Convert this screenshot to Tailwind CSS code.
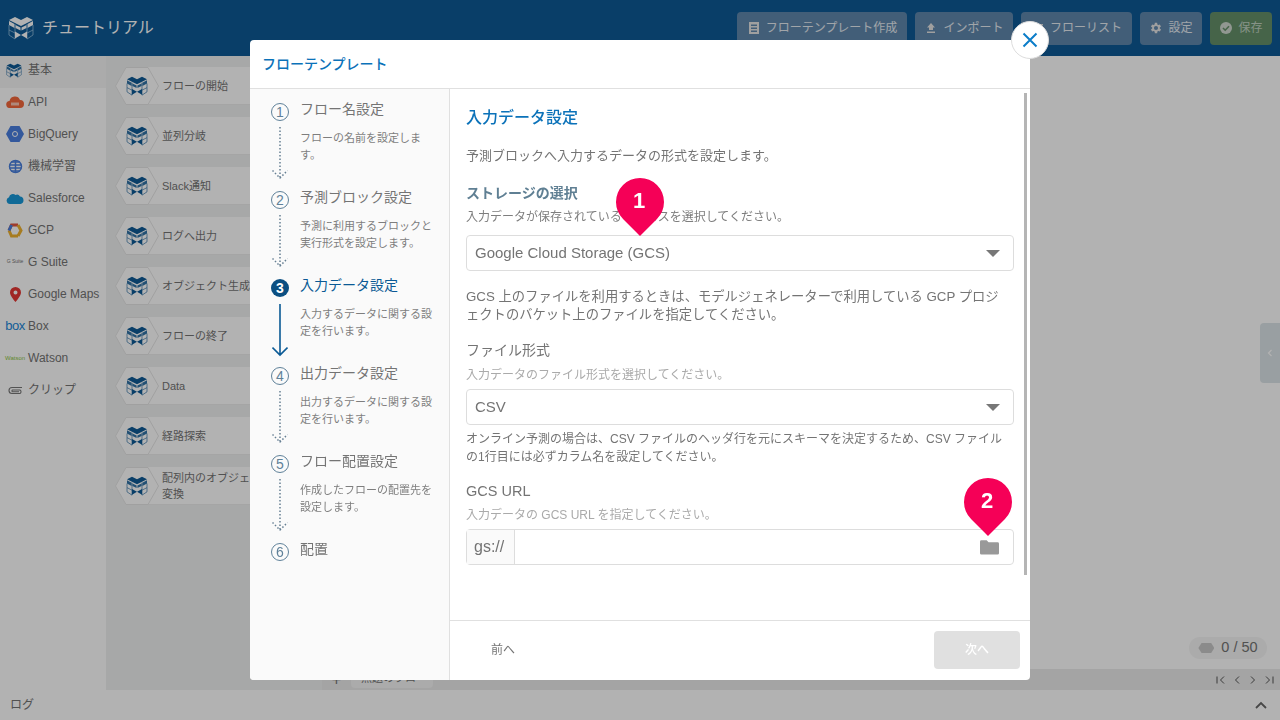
<!DOCTYPE html>
<html lang="ja">
<head>
    <meta charset="UTF-8">
    <title>チュートリアル</title>
    <script src="https://cdn.jsdelivr.net/npm/@tailwindcss/browser@4"></script>
</head>
<body class="w-[1280px] h-[720px] overflow-hidden bg-white text-[#747474] font-['Liberation_Sans','Noto_Sans_CJK_JP',sans-serif]">

    <svg class="hidden">
        <symbol id="cube" viewBox="0 0 26 24">
            <path d="M1 4l6-3 6 3 6-3 6 3-6 3-6 3-6-3z" fill="#0d5a96"/>
            <path d="M1 5l5.500 3v4L1 9zM25 5l-5.500 3v4L25 9zM7.500 9l5 2.500v3L7.500 12zM18.500 9l-5 2.500v3l5-2.500z" fill="#0d5a96" opacity=".85"/>
            <path d="M1 9v10l6 4M25 9v10l-6 4M7 8v15M19 8v15M1 14l6 3M25 14l-6 3" fill="none" stroke="#0d5a96" stroke-width=".7"/>
            <path d="M7 15.500l6 3.500 6-3.500v7l-6-3.500-6 3.500z" fill="#0d5a96"/>
        </symbol>
        <symbol id="hex" viewBox="0 0 44 38">
            <path d="M11 .5h22L43.500 19 33 37.500H11L.5 19z" fill="#fff" stroke="#e6e6e6"/>
        </symbol>
    </svg>

    <!-- Page behind the dialog -->
    <div class="flex flex-col h-[720px]">
        <header class="h-14 shrink-0 bg-[#0d5a96] flex items-center pl-2 pr-2">
            <svg class="w-[26px] h-6" viewBox="0 0 26 24">
                <path d="M1 4l6-3 6 3 6-3 6 3-6 3-6 3-6-3z" fill="#fff"/>
                <path d="M1 5l5.500 3v4L1 9zM25 5l-5.500 3v4L25 9zM7.500 9l5 2.500v3L7.500 12zM18.500 9l-5 2.500v3l5-2.500z" fill="#fff"/>
                <path d="M1 9v10l6 4M25 9v10l-6 4M7 8v15M19 8v15M1 14l6 3M25 14l-6 3" fill="none" stroke="#a9cbe6" stroke-width=".7"/>
                <path d="M7 15.500l6 3.500 6-3.500v7l-6-3.500-6 3.500z" fill="#fff"/>
            </svg>
            <span class="ml-2 text-[16px] text-white">チュートリアル</span>
            <div class="ml-auto flex gap-2 text-[12px] text-white/85">
                <button class="h-[33px] w-[170px] rounded bg-[#5f87ad] flex items-center justify-center gap-[5px]">
                    <svg class="w-[14px] h-[14px]" viewBox="0 0 14 14" fill="#e4e4e4"><path d="M2 1h10v12H2zM4 3.500v1.500h6V3.500zM4 6.500V8h6V6.500zM4 9.500V11h6V9.500z" fill-rule="evenodd"/></svg>
                    フローテンプレート作成
                </button>
                <button class="h-[33px] w-[98px] rounded bg-[#5f87ad] flex items-center justify-center gap-[5px]">
                    <svg class="w-[14px] h-[14px]" viewBox="0 0 14 14" fill="#e4e4e4"><path d="M7 2l4 4.500H9V9H5V6.500H3zM3 10.500h8V12H3z"/></svg>
                    インポート
                </button>
                <button class="h-[33px] w-[111px] rounded bg-[#5f87ad] flex items-center justify-center gap-[5px]">
                    <svg class="w-[14px] h-[14px]" viewBox="0 0 14 14" fill="#e4e4e4"><path d="M2 3h10v1.500H2zM2 6.500h10V8H2zM2 10h10v1.500H2z"/></svg>
                    フローリスト
                </button>
                <button class="h-[33px] w-[62px] rounded bg-[#5f87ad] flex items-center justify-center gap-[5px]">
                    <svg class="w-[14px] h-[14px]" viewBox="0 0 24 24" fill="#e4e4e4"><path d="M19.400 13a7.500 7.500 0 000-2l2.100-1.600-2-3.500-2.500 1a7.500 7.500 0 00-1.700-1L15 3.200h-4l-.4 2.700a7.500 7.500 0 00-1.700 1l-2.500-1-2 3.500L6.500 11a7.500 7.500 0 000 2l-2.100 1.600 2 3.500 2.500-1a7.500 7.500 0 001.700 1l.4 2.700h4l.4-2.700a7.500 7.500 0 001.700-1l2.500 1 2-3.500zM13 15.500a3.500 3.500 0 110-7 3.500 3.500 0 010 7z" transform="translate(-1 0)"/></svg>
                    設定
                </button>
                <button class="h-[33px] w-[62px] rounded bg-[#659069] flex items-center justify-center gap-[5px] text-white/60">
                    <svg class="w-[14px] h-[14px]" viewBox="0 0 14 14"><circle cx="7" cy="7" r="6" fill="#d0d8d0"/><path d="M4 7l2.200 2.200L10 5.200" fill="none" stroke="#659069" stroke-width="1.600"/></svg>
                    保存
                </button>
            </div>
        </header>

        <div class="flex-1 flex min-h-0 relative">
            <!-- Block categories -->
            <nav class="w-[106px] shrink-0 bg-white text-[12px] whitespace-nowrap">
                <div class="h-8 pb-1 flex items-center bg-[#f5f5f5]"><span class="w-[28px] flex justify-center"><svg class="w-4 h-[15px]"><use href="#cube"/></svg></span>基本</div>
                <div class="h-8 pb-1 flex items-center"><span class="w-[30px] flex justify-center"><svg class="w-[18px] h-3" viewBox="0 0 18 12"><path d="M4 12a3.500 3.500 0 01-.5-7A5.500 5.500 0 0114 4a4 4 0 010 8z" fill="#f4673b"/><path d="M5 6.500h8v3H5z" fill="#fbc4b0"/></svg></span><span class="-ml-[2px]">API</span></div>
                <div class="h-8 pb-1 flex items-center"><span class="w-[30px] flex justify-center"><svg class="w-[18px] h-4" viewBox="0 0 18 16"><path d="M4.500 0h9L18 8l-4.500 8h-9L0 8z" fill="#4a7fe0"/><circle cx="9" cy="8" r="2.500" fill="none" stroke="#fff"/></svg></span><span class="-ml-[2px]">BigQuery</span></div>
                <div class="h-8 pb-1 flex items-center"><span class="w-[30px] flex justify-center"><svg class="w-[15px] h-[15px]" viewBox="0 0 15 15" fill="none" stroke="#4a80de" stroke-width="1.500"><path d="M3 3h9M1.500 6h12M1.500 9h12M3 12h9M7.500 2v11"/><circle cx="7.500" cy="7.500" r="6"/></svg></span><span class="-ml-[2px]">機械学習</span></div>
                <div class="h-8 pb-1 flex items-center"><span class="w-[30px] flex justify-center"><svg class="w-[18px] h-3" viewBox="0 0 18 12"><path d="M4 12a3.500 3.500 0 01-1-6.800A4 4 0 019.500 3 3.500 3.500 0 0114 4.500 3.800 3.800 0 0114.500 12z" fill="#1798d8"/></svg></span><span class="-ml-[2px]">Salesforce</span></div>
                <div class="h-8 pb-1 flex items-center"><span class="w-[30px] flex justify-center"><svg class="w-4 h-[15px]" viewBox="0 0 16 15" fill="none" stroke-width="3"><path d="M2 7.500L4.500 2H11" stroke="#e4553f"/><path d="M11 2l3 5.500-3 5.500" stroke="#efb22f"/><path d="M11 13H4.500L2 7.500" stroke="#efb22f"/><path d="M2 7.500L4.500 2" stroke="#4a80de"/></svg></span><span class="-ml-[2px]">GCP</span></div>
                <div class="h-8 pb-1 flex items-center"><span class="w-[30px] text-[5px] text-center">G Suite</span><span class="-ml-[2px]">G Suite</span></div>
                <div class="h-8 pb-1 flex items-center"><span class="w-[30px] flex justify-center"><svg class="w-[11px] h-[15px]" viewBox="0 0 11 15"><path fill-rule="evenodd" d="M5.500 0A5.500 5.500 0 000 5.500C0 9 5.500 15 5.500 15S11 9 11 5.500A5.500 5.500 0 005.500 0zm0 3.500a2 2 0 110 4 2 2 0 010-4z" fill="#e53935"/></svg></span><span class="-ml-[2px]">Google Maps</span></div>
                <div class="h-8 pb-1 flex items-center"><span class="w-[30px] text-[#1b87d9] text-[13px] text-center tracking-[-0.5px]">box</span><span class="-ml-[2px]">Box</span></div>
                <div class="h-8 pb-1 flex items-center"><span class="w-[30px] text-[#8dc63f] text-[6px] text-center">Watson</span><span class="-ml-[2px]">Watson</span></div>
                <div class="h-8 pb-1 flex items-center"><span class="w-[30px] flex justify-center"><svg class="w-[16px] h-[10px]" viewBox="0 0 16 10" fill="none" stroke="#777" stroke-width="1.100"><path d="M15 2.500H5a3 3 0 000 6h8a2 2 0 000-3.500H5.500a1 1 0 000 1.800H12"/></svg></span><span class="-ml-[2px]">クリップ</span></div>
            </nav>

            <!-- Block list -->
            <div class="w-[216px] shrink-0 bg-[#eff1f1] pl-[9px] pt-[11px] text-[11px] flex flex-col gap-3">
                <div class="h-[38px] relative flex items-center"><div class="absolute left-[30px] right-0 inset-y-0 bg-white border-b border-[#ececec]"></div><span class="relative w-[44px] h-[38px] flex items-center justify-center"><svg class="absolute inset-0 w-[44px] h-[38px]"><use href="#hex"/></svg><svg class="relative w-[22px] h-5"><use href="#cube"/></svg></span><span class="relative ml-[3px]">フローの開始</span></div>
                <div class="h-[38px] relative flex items-center"><div class="absolute left-[30px] right-0 inset-y-0 bg-white border-b border-[#ececec]"></div><span class="relative w-[44px] h-[38px] flex items-center justify-center"><svg class="absolute inset-0 w-[44px] h-[38px]"><use href="#hex"/></svg><svg class="relative w-[22px] h-5"><use href="#cube"/></svg></span><span class="relative ml-[3px]">並列分岐</span></div>
                <div class="h-[38px] relative flex items-center"><div class="absolute left-[30px] right-0 inset-y-0 bg-white border-b border-[#ececec]"></div><span class="relative w-[44px] h-[38px] flex items-center justify-center"><svg class="absolute inset-0 w-[44px] h-[38px]"><use href="#hex"/></svg><svg class="relative w-[22px] h-5"><use href="#cube"/></svg></span><span class="relative ml-[3px]">Slack通知</span></div>
                <div class="h-[38px] relative flex items-center"><div class="absolute left-[30px] right-0 inset-y-0 bg-white border-b border-[#ececec]"></div><span class="relative w-[44px] h-[38px] flex items-center justify-center"><svg class="absolute inset-0 w-[44px] h-[38px]"><use href="#hex"/></svg><svg class="relative w-[22px] h-5"><use href="#cube"/></svg></span><span class="relative ml-[3px]">ログへ出力</span></div>
                <div class="h-[38px] relative flex items-center"><div class="absolute left-[30px] right-0 inset-y-0 bg-white border-b border-[#ececec]"></div><span class="relative w-[44px] h-[38px] flex items-center justify-center"><svg class="absolute inset-0 w-[44px] h-[38px]"><use href="#hex"/></svg><svg class="relative w-[22px] h-5"><use href="#cube"/></svg></span><span class="relative ml-[3px] whitespace-nowrap">オブジェクト生成</span></div>
                <div class="h-[38px] relative flex items-center"><div class="absolute left-[30px] right-0 inset-y-0 bg-white border-b border-[#ececec]"></div><span class="relative w-[44px] h-[38px] flex items-center justify-center"><svg class="absolute inset-0 w-[44px] h-[38px]"><use href="#hex"/></svg><svg class="relative w-[22px] h-5"><use href="#cube"/></svg></span><span class="relative ml-[3px]">フローの終了</span></div>
                <div class="h-[38px] relative flex items-center"><div class="absolute left-[30px] right-0 inset-y-0 bg-white border-b border-[#ececec]"></div><span class="relative w-[44px] h-[38px] flex items-center justify-center"><svg class="absolute inset-0 w-[44px] h-[38px]"><use href="#hex"/></svg><svg class="relative w-[22px] h-5"><use href="#cube"/></svg></span><span class="relative ml-[3px]">Data</span></div>
                <div class="h-[38px] relative flex items-center"><div class="absolute left-[30px] right-0 inset-y-0 bg-white border-b border-[#ececec]"></div><span class="relative w-[44px] h-[38px] flex items-center justify-center"><svg class="absolute inset-0 w-[44px] h-[38px]"><use href="#hex"/></svg><svg class="relative w-[22px] h-5"><use href="#cube"/></svg></span><span class="relative ml-[3px]">経路探索</span></div>
                <div class="h-[38px] relative flex items-center"><div class="absolute left-[30px] right-0 inset-y-0 bg-white border-b border-[#ececec]"></div><span class="relative w-[44px] h-[38px] flex items-center justify-center"><svg class="absolute inset-0 w-[44px] h-[38px]"><use href="#hex"/></svg><svg class="relative w-[22px] h-5"><use href="#cube"/></svg></span><span class="relative ml-[3px] w-[125px] leading-4">配列内のオブジェクトを変換</span></div>
            </div>

            <!-- Canvas -->
            <div class="flex-1 flex flex-col">
                <div class="flex-1 relative">
                    <div class="absolute right-[13px] bottom-[10px] h-[22px] w-[78px] rounded-full bg-[#f5f5f5] flex items-center justify-center gap-[7px] text-[14.500px]">
                        <span class="w-4 h-[10px] bg-[#c8c8c8] [clip-path:polygon(20%_0,80%_0,100%_50%,80%_100%,20%_100%,0_50%)]"></span>0 / 50
                    </div>
                    <div class="absolute right-0 top-[267px] w-5 h-[60px] bg-[#dce4e8] rounded-l flex items-center justify-center">
                        <svg class="w-2 h-2" viewBox="0 0 8 8" fill="none" stroke="#fff" stroke-width="1.200"><path d="M5.500 1L2.500 4l3 3"/></svg>
                    </div>
                </div>
                <div class="h-[21px] bg-[#ebebeb] flex items-center pr-[5px] text-[11px]">
                    <span class="w-[29px] text-center text-[16px]">+</span>
                    <span class="h-[19px] self-start w-[82px] rounded-b bg-[#f5f5f5] flex items-center pl-[10px]">無題のフロー</span>
                    <span class="ml-auto flex gap-1 text-[#555]">
                        <svg class="w-3 h-3" viewBox="0 0 12 12" fill="none" stroke="currentColor"><path d="M2 2.500v7M9 2.500L5.500 6 9 9.500"/></svg>
                        <svg class="w-3 h-3" viewBox="0 0 12 12" fill="none" stroke="currentColor"><path d="M8 2.500L4.500 6 8 9.500"/></svg>
                        <svg class="w-3 h-3" viewBox="0 0 12 12" fill="none" stroke="currentColor"><path d="M4 2.500L7.500 6 4 9.500"/></svg>
                        <svg class="w-3 h-3" viewBox="0 0 12 12" fill="none" stroke="currentColor"><path d="M10 2.500v7M3 2.500L6.500 6 3 9.500"/></svg>
                    </span>
                </div>
            </div>
        </div>

        <footer class="h-[30px] shrink-0 bg-white flex items-center justify-between pl-[10px] pr-[12px] text-[12px]">
            ログ
            <svg class="w-[14px] h-[14px]" viewBox="0 0 14 14" fill="none" stroke="#666" stroke-width="1.800"><path d="M2 10l5-5 5 5"/></svg>
        </footer>
    </div>

    <!-- Overlay -->
    <div class="fixed inset-0 bg-black/30"></div>

    <!-- Dialog -->
    <div class="fixed left-[250px] top-10 w-[780px] h-[640px] bg-white rounded flex flex-col">
        <div class="h-[49px] shrink-0 border-b border-[#e0e0e0] flex items-center pl-3 text-[14px] font-medium text-[#0b72b9]">フローテンプレート</div>
        <div class="flex-1 flex min-h-0">

            <!-- Steps -->
            <aside class="w-[200px] shrink-0 bg-[#fafafa] border-r border-[#e0e0e0] rounded-bl pl-[21px] pt-[10px]">
                <div class="h-[88px] flex gap-[11px]">
                    <div class="w-[18px] flex flex-col items-center pt-1">
                        <span class="w-[18px] h-[18px] shrink-0 rounded-full border border-[#5f8199] text-[#5f8199] text-[14px] flex items-center justify-center">1</span>
                        <svg class="mt-[5px] w-4 h-[54px] shrink-0" viewBox="0 0 16 54" fill="none" stroke="#667f93" stroke-width="1.500" stroke-dasharray="1.500 2"><path d="M8 1v51M0.500 44.500L8 52l7.500-7.500"/></svg>
                    </div>
                    <div class="w-[136px]">
                        <div class="text-[14px] leading-5 h-[20px]">フロー名設定</div>
                        <p class="mt-[11px] text-[11px] leading-[17px] text-[#7e7e7e]">フローの名前を設定します。</p>
                    </div>
                </div>
                <div class="h-[88px] flex gap-[11px]">
                    <div class="w-[18px] flex flex-col items-center pt-1">
                        <span class="w-[18px] h-[18px] shrink-0 rounded-full border border-[#5f8199] text-[#5f8199] text-[14px] flex items-center justify-center">2</span>
                        <svg class="mt-[5px] w-4 h-[54px] shrink-0" viewBox="0 0 16 54" fill="none" stroke="#667f93" stroke-width="1.500" stroke-dasharray="1.500 2"><path d="M8 1v51M0.500 44.500L8 52l7.500-7.500"/></svg>
                    </div>
                    <div class="w-[136px]">
                        <div class="text-[14px] leading-5 h-[20px]">予測ブロック設定</div>
                        <p class="mt-[11px] text-[11px] leading-[17px] text-[#7e7e7e]">予測に利用するブロックと実行形式を設定します。</p>
                    </div>
                </div>
                <div class="h-[88px] flex gap-[11px]">
                    <div class="w-[18px] flex flex-col items-center pt-1">
                        <span class="w-[18px] h-[18px] shrink-0 rounded-full bg-[#0b4f82] text-white text-[14px] font-bold flex items-center justify-center">3</span>
                        <svg class="mt-[6px] w-4 h-[54px] shrink-0" viewBox="0 0 16 54" fill="none" stroke="#0b5a95" stroke-width="1.600"><path d="M8 1v51M0.500 44.500L8 52l7.500-7.500"/></svg>
                    </div>
                    <div class="w-[136px]">
                        <div class="text-[14px] leading-5 h-[20px] text-[#0b5a95]">入力データ設定</div>
                        <p class="mt-[11px] text-[11px] leading-[17px] text-[#7e7e7e]">入力するデータに関する設定を行います。</p>
                    </div>
                </div>
                <div class="h-[88px] flex gap-[11px]">
                    <div class="w-[18px] flex flex-col items-center pt-1">
                        <span class="w-[18px] h-[18px] shrink-0 rounded-full border border-[#5f8199] text-[#5f8199] text-[14px] flex items-center justify-center">4</span>
                        <svg class="mt-[5px] w-4 h-[54px] shrink-0" viewBox="0 0 16 54" fill="none" stroke="#667f93" stroke-width="1.500" stroke-dasharray="1.500 2"><path d="M8 1v51M0.500 44.500L8 52l7.500-7.500"/></svg>
                    </div>
                    <div class="w-[136px]">
                        <div class="text-[14px] leading-5 h-[20px]">出力データ設定</div>
                        <p class="mt-[11px] text-[11px] leading-[17px] text-[#7e7e7e]">出力するデータに関する設定を行います。</p>
                    </div>
                </div>
                <div class="h-[88px] flex gap-[11px]">
                    <div class="w-[18px] flex flex-col items-center pt-1">
                        <span class="w-[18px] h-[18px] shrink-0 rounded-full border border-[#5f8199] text-[#5f8199] text-[14px] flex items-center justify-center">5</span>
                        <svg class="mt-[5px] w-4 h-[54px] shrink-0" viewBox="0 0 16 54" fill="none" stroke="#667f93" stroke-width="1.500" stroke-dasharray="1.500 2"><path d="M8 1v51M0.500 44.500L8 52l7.500-7.500"/></svg>
                    </div>
                    <div class="w-[136px]">
                        <div class="text-[14px] leading-5 h-[20px]">フロー配置設定</div>
                        <p class="mt-[11px] text-[11px] leading-[17px] text-[#7e7e7e]">作成したフローの配置先を設定します。</p>
                    </div>
                </div>
                <div class="flex gap-[11px]">
                    <div class="w-[18px] pt-1">
                        <span class="w-[18px] h-[18px] rounded-full border border-[#5f8199] text-[#5f8199] text-[14px] flex items-center justify-center">6</span>
                    </div>
                    <div class="text-[14px] leading-5">配置</div>
                </div>
            </aside>

            <!-- Form -->
            <div class="flex-1 flex flex-col min-w-0">
                <div class="flex-1 relative pl-4 pr-4 pt-[19px] min-h-0">
                    <h2 class="text-[16px] leading-5 font-medium text-[#0b72b9]">入力データ設定</h2>
                    <p class="mt-[18px] text-[13px] leading-5">予測ブロックへ入力するデータの形式を設定します。</p>
                    <h3 class="mt-[17px] text-[14px] leading-5 font-bold text-[#5f7f93]">ストレージの選択</h3>
                    <p class="mt-[6px] text-[12px] leading-4 text-[#7e7e7e]">入力データが保存されているサービスを選択してください。</p>
                    <div class="mt-[10px] h-9 border border-[#ddd] rounded-sm flex items-center justify-between pl-2 pr-[13px] text-[15px]">
                        Google Cloud Storage (GCS)
                        <span class="w-0 h-0 border-x-[7px] border-x-transparent border-t-[7px] border-t-[#777]"></span>
                    </div>
                    <p class="mt-[17px] pr-1 text-[13.300px] leading-[18px]">GCS 上のファイルを利用するときは、モデルジェネレーターで利用している GCP プロジェクトのバケット上のファイルを指定してください。</p>
                    <h3 class="mt-[16px] text-[14px] leading-5">ファイル形式</h3>
                    <p class="mt-[7px] text-[12px] leading-4 text-[#aaa]">入力データのファイル形式を選択してください。</p>
                    <div class="mt-[6px] h-9 border border-[#ddd] rounded-sm flex items-center justify-between pl-2 pr-[13px] text-[15px]">
                        CSV
                        <span class="w-0 h-0 border-x-[7px] border-x-transparent border-t-[7px] border-t-[#777]"></span>
                    </div>
                    <p class="mt-[5px] text-[12px] leading-[18px]">オンライン予測の場合は、CSV ファイルのヘッダ行を元にスキーマを決定するため、CSV ファイルの1行目には必ずカラム名を設定してください。</p>
                    <h3 class="mt-[15px] text-[14.500px] leading-5">GCS URL</h3>
                    <p class="mt-[6px] text-[12px] leading-4 text-[#aaa]">入力データの GCS URL を指定してください。</p>
                    <div class="mt-[6px] h-9 border border-[#ddd] rounded-sm flex items-center text-[16px]">
                        <span class="w-[48px] h-full border-r border-[#ddd] bg-[#fafafa] flex items-center pl-[7px]">gs://</span>
                        <svg class="ml-auto mr-[14px] w-[19px] h-4" viewBox="0 0 20 16" fill="#999"><path d="M1.500 1H7l2 2h9.500A1.500 1.500 0 0120 4.500v10a1.500 1.500 0 01-1.500 1.500h-17A1.500 1.500 0 010 14.500v-12A1.500 1.500 0 011.500 1z"/></svg>
                    </div>
                    <!-- Scrollbar -->
                    <div class="absolute right-[3px] top-[4px] w-[3px] h-[482px] bg-[#b5b5b5]"></div>
                    <!-- Callouts -->
                    <div class="absolute left-[166px] top-[89px] w-12 h-12 rounded-[50%_50%_0_50%] rotate-45 bg-[#f50057]"></div>
                    <span class="absolute left-[165px] top-[98px] w-12 text-center text-[22px] leading-7 font-bold text-white">1</span>
                    <div class="absolute left-[514px] top-[389px] w-12 h-12 rounded-[50%_50%_0_50%] rotate-45 bg-[#f50057]"></div>
                    <span class="absolute left-[513px] top-[398px] w-12 text-center text-[22px] leading-7 font-bold text-white">2</span>
                </div>
                <div class="h-[60px] shrink-0 border-t border-[#e0e0e0] flex items-center justify-between pl-[41px] pr-[10px] pb-[2px] text-[12px]">
                    <span>前へ</span>
                    <button class="w-[86px] h-[38px] rounded-sm bg-[#e0e0e0] text-white font-medium">次へ</button>
                </div>
            </div>
        </div>

        <!-- Close -->
        <button class="absolute right-[-19px] top-[-19px] w-[38px] h-[38px] rounded-full bg-white border border-[#ddd] flex items-center justify-center">
            <svg class="w-[18px] h-[18px]" viewBox="0 0 18 18" fill="none" stroke="#0b7dc9" stroke-width="2"><path d="M2.500 2.500l13 13M15.500 2.500l-13 13"/></svg>
        </button>
    </div>

</body>
</html>
